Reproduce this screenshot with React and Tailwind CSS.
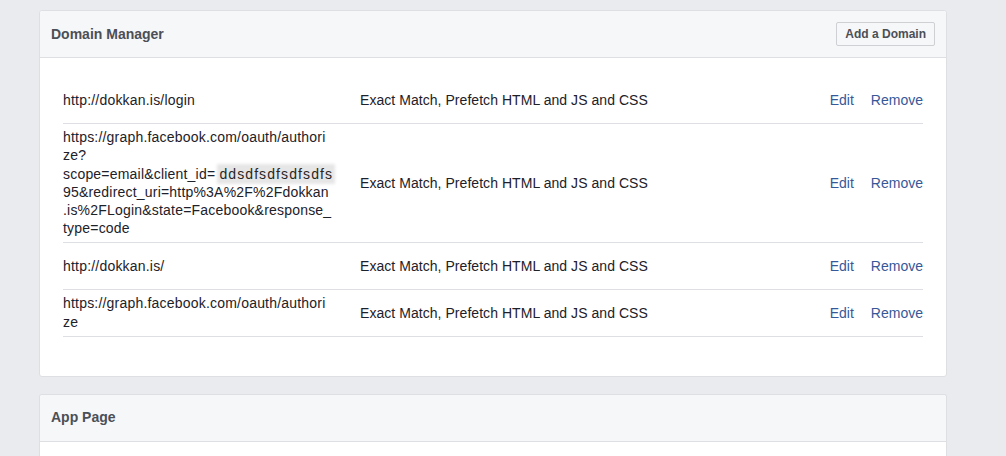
import React from "react";

const rows = [
  { lines: ["http://dokkan.is/login"] },
  {
    lines: [
      "https://graph.facebook.com/oauth/authori",
      "ze?",
      "REDACT",
      "95&redirect_uri=http%3A%2F%2Fdokkan",
      ".is%2FLogin&state=Facebook&response_",
      "type=code",
    ],
  },
  { lines: ["http://dokkan.is/"] },
  { lines: ["https://graph.facebook.com/oauth/authori", "ze"] },
];

function UrlLine({ text }) {
  if (text === "REDACT") {
    return (
      <span className="block whitespace-nowrap">
        scope=email&amp;client_id={" "}
        <span className="bg-[#e6e6e6] tracking-[1.1px] text-[#262626] shadow-[0_0_3px_2px_#e6e6e6]">ddsdfsdfsdfsdfs</span>
      </span>
    );
  }
  return <span className="block whitespace-nowrap">{text}</span>;
}

export default function App() {
  return (
    <div className="h-[456px] overflow-hidden bg-[#e9ebee] pl-[39px] pt-[10px] font-['Liberation_Sans',Arial,sans-serif] text-[14px]">
      {/* Domain Manager */}
      <div className="w-[908px] rounded-[3px] border border-[#dddfe2] bg-white">
        <div className="flex h-[47px] items-center justify-between border-b border-[#dddfe2] bg-[#f6f7f9] pl-[11px] pr-[11px] rounded-t-[3px]">
          <h2 className="text-[14px] font-bold text-[#4b4f56]">Domain Manager</h2>
          <button className="h-[24px] rounded-[2px] border border-[#ced0d4] bg-[#f6f7f9] px-[8px] text-[12px] font-bold text-[#4b4f56]">
            Add a Domain
          </button>
        </div>
        <div className="px-[23px] pt-[19px] pb-[39px]">
          {rows.map((row, i) => (
            <div
              key={i}
              className="flex min-h-[47px] items-center border-b border-[#dddfe2] py-[4px] leading-[18.3px] text-[#1d2129]"
            >
              <div className="w-[297px] tracking-[0.2px]">
                {row.lines.map((l, j) => (
                  <UrlLine key={j} text={l} />
                ))}
              </div>
              <div className="flex-1 tracking-[0.05px]">Exact Match, Prefetch HTML and JS and CSS</div>
              <div className="flex text-[#365899]">
                <a href="#" className="hover:underline">Edit</a>
                <a href="#" className="ml-[17px] hover:underline">Remove</a>
              </div>
            </div>
          ))}
        </div>
      </div>

      {/* App Page */}
      <div className="mt-[17px] w-[908px] rounded-t-[3px] border border-b-0 border-[#dddfe2] bg-white">
        <div className="flex h-[47px] items-center border-b border-[#dddfe2] bg-[#f6f7f9] pl-[11px] rounded-t-[3px]">
          <h2 className="text-[14px] font-bold text-[#4b4f56]">App Page</h2>
        </div>
        <div className="h-[40px]"></div>
      </div>
    </div>
  );
}
